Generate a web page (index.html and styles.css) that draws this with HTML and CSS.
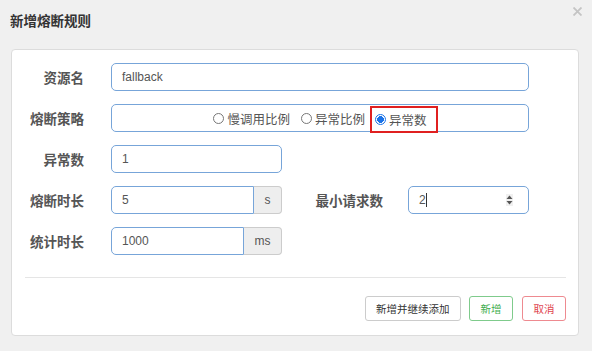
FILE: index.html
```html
<!DOCTYPE html>
<html>
<head>
<meta charset="utf-8">
<link rel="stylesheet" href="styles.css">
</head>
<body>
<div class="dialog">
  <div class="header">
    <div class="title">新增熔断规则</div>
    <div class="close"><svg width="9" height="9" viewBox="0 0 9 9"><path d="M0.5 0.5L8.5 8.5M8.5 0.5L0.5 8.5" stroke="#c4c4c4" stroke-width="1.8" fill="none"/></svg></div>
  </div>
  <div class="card">
    <div class="row">
      <div class="label">资源名</div>
      <div class="input wide">fallback</div>
    </div>
    <div class="row">
      <div class="label">熔断策略</div>
      <div class="input wide radios">
        <span class="radio"><span class="dot"></span><span>慢调用比例</span></span>
        <span class="radio second"><span class="dot"></span><span>异常比例</span></span>
        <span class="radio checked boxed"><span class="dot"></span><span>异常数</span></span>
      </div>
    </div>
    <div class="row">
      <div class="label">异常数</div>
      <div class="input short">1</div>
    </div>
    <div class="row">
      <div class="label">熔断时长</div>
      <div class="group">
        <div class="input grouped g-s">5</div>
        <div class="addon a-s">s</div>
      </div>
      <div class="label label2">最小请求数</div>
      <div class="input num"><span class="val">2<span class="caret"></span></span><span class="spin"><svg width="7" height="10" viewBox="0 0 7 10"><path d="M3.5 0.5L6.5 4H0.5Z" fill="#555"/><path d="M3.5 9.5L6.5 6H0.5Z" fill="#555"/></svg></span></div>
    </div>
    <div class="row last">
      <div class="label">统计时长</div>
      <div class="group">
        <div class="input grouped g-ms">1000</div>
        <div class="addon a-ms">ms</div>
      </div>
    </div>
    <div class="divider"></div>
    <div class="buttons">
      <button class="btn">新增并继续添加</button>
      <button class="btn green">新增</button>
      <button class="btn red">取消</button>
    </div>
  </div>
</div>
</body>
</html>
```
FILE: styles.css
```css
* { box-sizing: border-box; }
html, body { margin: 0; padding: 0; }
body {
  width: 592px;
  height: 351px;
  background: #f0f0f0;
  font-family: "Noto Sans CJK SC", "Liberation Sans", sans-serif;
  overflow: hidden;
}
.header {
  display: flex;
  justify-content: space-between;
  align-items: flex-start;
  height: 49px;
  padding: 0 10px 0 10px;
}
.title {
  margin-top: 10px;
  font-size: 13.5px;
  line-height: 20px;
  font-weight: bold;
  color: #333;
}
.close {
  margin-top: 7px;
  width: 9px;
  height: 9px;
  display: flex;
}
.card {
  margin: 0 13px 0 11px;
  background: #fff;
  border: 1px solid #dcdcdc;
  border-radius: 4px;
  padding: 13px 0 14px;
}
.row {
  display: flex;
  align-items: center;
  height: 28px;
  margin-bottom: 13px;
}
.row.last { margin-bottom: 0; }
.label {
  width: 72px;
  text-align: right;
  font-size: 13.5px;
  font-weight: bold;
  color: #555;
  margin-right: 27px;
  line-height: 20px;
}
.label2 {
  width: 101px;
  margin-right: 25px;
}
.input {
  height: 28px;
  border: 1px solid #77a5d9;
  border-radius: 5px;
  padding: 0 10px;
  font-family: "Liberation Sans", Arial, sans-serif;
  font-size: 12px;
  color: #555;
  display: flex;
  align-items: center;
  background: #fff;
}
.wide { width: 418px; }
.short { width: 171px; }
.radios {
  justify-content: center;
  align-items: flex-start;
  padding-left: 21px;
  font-family: "Noto Sans CJK SC", sans-serif;
  font-size: 12.5px;
}
.radio {
  display: flex;
  align-items: center;
  align-self: center;
  height: 20px;
  color: #555;
}
.radio .dot {
  width: 11px;
  height: 11px;
  border: 1px solid #777;
  border-radius: 50%;
  margin-right: 3px;
  background: #fff;
}
.radio.second { margin-left: 11px; }
.radio.checked .dot {
  border: 1px solid #1a73e8;
  background: radial-gradient(circle, #1a73e8 0 3.2px, #fff 3.6px);
}
.boxed {
  align-self: flex-start;
  height: 27px;
  margin-top: 1px;
  margin-left: 5px;
  border: 2px solid #e02020;
  padding: 0 9px 0 3px;
}
.group { display: flex; width: 171px; }
.grouped {
  border-radius: 5px 0 0 5px;
}
.g-s { width: 143px; }
.g-ms { width: 133px; }
.addon {
  height: 28px;
  background: #eeeeee;
  border: 1px solid #cccccc;
  border-left: none;
  border-radius: 0 4px 4px 0;
  display: flex;
  align-items: center;
  justify-content: center;
  font-family: "Liberation Sans", Arial, sans-serif;
  font-size: 12px;
  color: #555;
}
.a-s { width: 28px; }
.a-ms { width: 38px; }
.num {
  width: 121px;
  justify-content: space-between;
  padding-right: 15px;
}
.val { display: flex; align-items: center; }
.caret {
  display: inline-block;
  width: 1px;
  height: 14px;
  background: #333;
  margin-left: 0;
}
.spin {
  width: 7px;
  height: 12px;
  background: #f0f0f0;
  display: flex;
  align-items: center;
  justify-content: center;
}
.divider {
  height: 1px;
  background: #e5e5e5;
  margin: 22px 12px 0 13px;
}
.buttons {
  display: flex;
  justify-content: flex-end;
  gap: 8px;
  margin-top: 18px;
  padding-right: 12px;
}
.btn {
  height: 25px;
  padding: 0 10.5px;
  border: 1px solid #cccccc;
  border-radius: 3px;
  background: #fff;
  font-family: "Noto Sans CJK SC", sans-serif;
  font-size: 10.5px;
  color: #333;
  line-height: 23px;
}
.btn.green { border-color: #7fcb8c; color: #3fae4f; }
.btn.red { border-color: #ee8a90; color: #e0454f; margin-left: 1px; }
```
